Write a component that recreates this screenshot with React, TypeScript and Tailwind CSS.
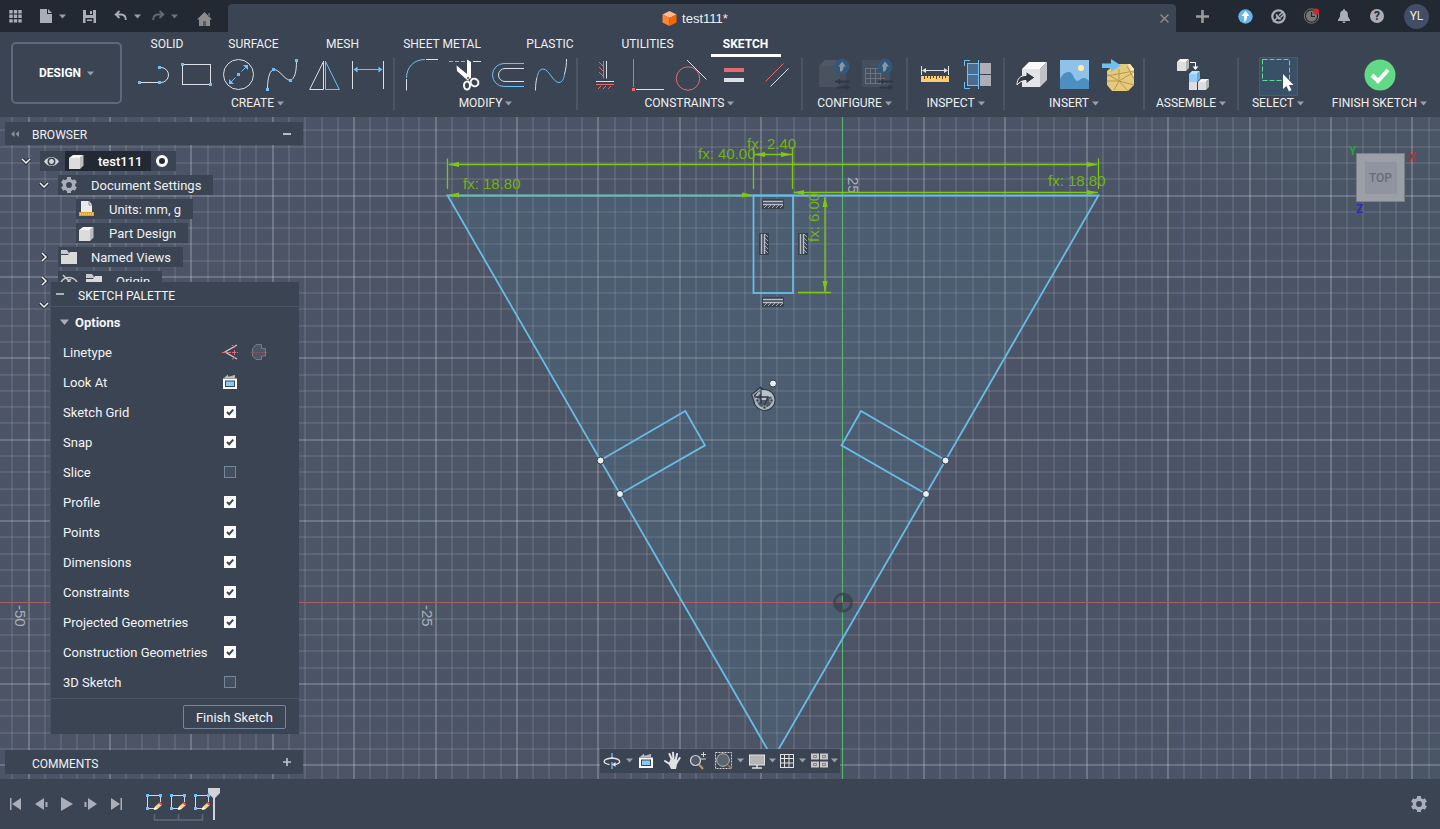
import type { ReactNode } from "react";

const BLUE = "#6cc1f7";
const WHITE = "#dcdfe4";
const RED = "#e06c70";
const GREY = "#a9aeb8";

function Icon({ size = 32, box, children }: { size?: number; box?: string; children: ReactNode }) {
  return (
    <svg
      width={size}
      height={size}
      viewBox={box ?? `0 0 ${size} ${size}`}
      fill="none"
      className="shrink-0 overflow-visible"
      aria-hidden="true"
    >
      {children}
    </svg>
  );
}

function Caret({ dim = false }: { dim?: boolean }) {
  return (
    <svg width="7" height="5" viewBox="0 0 7 5" className="shrink-0" aria-hidden="true">
      <path d="M0 .5H7L3.5 4.5Z" fill={dim ? "#6b7280" : "#9aa0ab"} />
    </svg>
  );
}

function Dots({ points }: { points: [number, number][] }) {
  return (
    <>
      {points.map(([x, y]) => (
        <rect key={`${x}-${y}`} x={x - 1.5} y={y - 1.5} width="3" height="3" fill={BLUE} />
      ))}
    </>
  );
}

function Box({ x, y, s, d, front = "#dedede", top = "#f4f4f4", side = "#b4b4b4" }: { x: number; y: number; s: number; d: number; front?: string; top?: string; side?: string }) {
  return (
    <>
      <path d={`M${x} ${y + d}L${x + d} ${y}H${x + s + d}L${x + s} ${y + d}Z`} fill={top} />
      <path d={`M${x + s} ${y + d}L${x + s + d} ${y}V${y + s}L${x + s} ${y + s + d}Z`} fill={side} />
      <rect x={x} y={y + d} width={s} height={s} fill={front} />
    </>
  );
}

/* ---------- ribbon drawings ---------- */

const createTools: [string, ReactNode][] = [
  ["Line", <>
    <path d="M2.5 23.5H22M22.5 8.5h1.5a7.5 7.5 0 0 1 0 15H22.5" stroke={WHITE} />
    <Dots points={[[2.5, 23.5], [22.5, 23.5], [22.5, 8.5]]} />
  </>],
  ["Rectangle", <>
    <rect x="2.5" y="5.5" width="28" height="20" stroke={WHITE} />
    <Dots points={[[2.5, 5.5], [30.5, 25.5]]} />
  </>],
  ["Circle", <>
    <circle cx="15.5" cy="15.5" r="15" stroke={WHITE} />
    <path d="M8 23L12.5 18.5M18.5 12.5L23 8" stroke={BLUE} />
    <path d="M6 25V20L11 25ZM25 6V11L20 6Z" fill={BLUE} />
    <Dots points={[[15.5, 15.5]]} />
  </>],
  ["Spline", <>
    <path d="M1.5 30C1.5 18 4 11 8 10.5 14 11 18 20 24 21.5 29 20 30.5 12 30.5 2" stroke={WHITE} />
    <Dots points={[[1.5, 30.5], [7.5, 10.5], [24.5, 21.5], [30.5, 1.5]]} />
  </>],
  ["Mirror", <>
    <path d="M14.5 2V30.5H.7L14.5 2.5" stroke={WHITE} />
    <path d="M16.5 2V30.5H30.3L16.5 2.5" stroke={BLUE} />
  </>],
  ["Sketch Dimension", <>
    <path d="M.5 2V30M31.5 2V30" stroke={WHITE} />
    <path d="M3 10.5H29" stroke={BLUE} />
    <path d="M1.5 10.5L5.5 7.5V13.5ZM30.5 10.5L26.5 7.5V13.5Z" fill={BLUE} />
  </>],
];

const modifyTools: [string, ReactNode][] = [
  ["Fillet", <>
    <path d="M.5 31.5V20M20 .5H32" stroke={WHITE} />
    <path d="M.5 19C.5 8 8 .5 19 .5" stroke={BLUE} />
  </>],
  ["Trim", <>
    <path d="M0 2.5H17" stroke={BLUE} strokeDasharray="4 2" />
    <path d="M24 2.5H32" stroke={WHITE} />
    <path d="M18 .5L22 3V19L18 21Z" fill="#fff" />
    <path d="M7.5 6.5L18 15 20 22 17 20 8 12Z" fill="#fff" />
    <ellipse cx="18" cy="26.5" rx="3" ry="4" stroke="#fff" strokeWidth="2" />
    <ellipse cx="25.5" cy="23.5" rx="4" ry="3.6" stroke="#fff" strokeWidth="2" transform="rotate(35 25.5 23.5)" />
    <circle cx="19" cy="19" r="1" fill="#3b4453" />
  </>],
  ["Offset", <>
    <path d="M32 4.5H12a11.5 11.5 0 0 0 0 23H32" stroke={BLUE} />
    <path d="M32 9.5H13a6.5 6.5 0 0 0 0 13H32" stroke={WHITE} />
  </>],
  ["Blend Curve", <>
    <path d="M.5 31.5C.5 26 1 22 2 18.5M29.5 15C31 10 31.5 5 31.5 0" stroke={WHITE} />
    <path d="M2 18.5C3 13 5 10 8 10 14 10 18 23.5 24 23.5 27 23.5 29 20 29.5 15" stroke={BLUE} />
  </>],
];

const constraintTools: [string, ReactNode][] = [
  ["Horizontal/Vertical", <>
    <path d="M14.5 2V19.5M14 7L10 3M14 12L10 8M14 17L10 13M7 25.5H25M12 27L9 30M17 27L14 30M22 27L19 30" stroke={RED} />
    <path d="M17.5 2V19.5M7 22.5H25" stroke={WHITE} />
  </>],
  ["Perpendicular", <>
    <path d="M1.5 0V28" stroke={RED} />
    <rect x="0" y="29" width="3" height="3" fill={RED} />
    <path d="M4 30.5H32" stroke={WHITE} />
  </>],
  ["Tangent", <>
    <circle cx="13" cy="19.5" r="11.7" stroke={RED} />
    <path d="M12 1L31.5 20.5" stroke={WHITE} />
  </>],
  ["Equal", <>
    <rect x="6" y="9" width="20" height="4" fill={RED} />
    <rect x="6" y="19" width="20" height="4" fill={WHITE} />
  </>],
  ["Parallel", <>
    <path d="M4.5 22.5L22.5 4.5" stroke={RED} />
    <path d="M9.5 27.5L27.5 9.5" stroke={WHITE} />
  </>],
];

const upBadge = (
  <>
    <circle cx="24" cy="7.5" r="7.7" fill="#2f587b" />
    <path d="M24 2.5L28 7.5H25.5C25.5 10 25 12 23.3 12.5H22V7.5H20.5Z" fill="#8b95a3" />
  </>
);

const slider = <path d="M17 22.5H32M19 28.5H32M21.5 20V25M28.5 26V31" stroke="#2f3744" strokeWidth="2" />;

const configureTools: [string, ReactNode][] = [
  ["Create Configuration", <>
    <Box x={1} y={1} s={21} d={6} front="#4a5260" top="#505866" side="#454d5b" />
    {slider}
    {upBadge}
  </>],
  ["Configuration Table", <>
    <rect x="1" y="1" width="28" height="27" fill="#464f5d" />
    <path d="M4 9.5H24M4 14.5H24M4 19.5H24M4 24.5H24M4.5 9V24.5M9.5 9V24.5M14.5 9V24.5M19.5 9V24.5" stroke="#6a7280" />
    {slider}
    {upBadge}
  </>],
];

const inspectTools: [string, ReactNode][] = [
  ["Measure", <>
    <path d="M2.5 7V16M29.5 7V16M4 11.5H28" stroke="#dfe2e6" />
    <path d="M3 11.5L7 9V14ZM29 11.5L25 9V14Z" fill="#dfe2e6" />
    <rect x="2" y="17" width="28" height="6" fill="#fbcb70" />
    <path d="M5.5 17v3M8.5 17v2M11.5 17v3M14.5 17v2M17.5 17v3M20.5 17v2M23.5 17v3M26.5 17v2" stroke="#5e4a2a" />
  </>],
  ["Section Analysis", <>
    <rect x="5" y="4" width="12" height="11" fill="#4c6c90" />
    <rect x="5" y="16" width="12" height="11" fill="#4c6c90" />
    <path d="M5 4.5H17M5 15.5H17M5 26.5H17M5.5 4V27M8 1.5H2.5V7M2.5 23V29.5H8M16.5 1V30" stroke={BLUE} />
    <rect x="18" y="4" width="11" height="11" fill="#adafb4" />
    <rect x="18" y="16" width="11" height="11" fill="#adafb4" />
  </>],
];

const insertTools: [string, ReactNode][] = [
  ["Insert Derive", <>
    <Box x={6} y={3} s={18} d={7} front="#e3e5e9" top="#fbfbfb" side="#c0c2c8" />
    <path d="M1 26C1 19 5 16.5 10 16.5V12.5L19 18.5 10 25V21.5C6 21.5 3.500 23 1 26Z" fill="#343a44" stroke="#f2f2f2" />
  </>],
  ["Canvas", <>
    <rect x="1" y="1" width="29" height="29" fill="#8ec2e8" />
    <circle cx="22" cy="9" r="3" fill="#fdeeb0" />
    <path d="M1 20C4 14 7 13 10 13 14 13 15 21 18 22 20 22 22 19 25 19 27 19 29 21 30 22V30H1Z" fill="#4d8fc0" />
  </>],
  ["Insert Mesh", <>
    <path d="M5 12L13 5H28L32 10V26L26 32H10L5 26Z" fill="#e6ca7c" />
    <path d="M26 5H28L32 10V18Z" fill="#f8ecc0" />
    <path d="M5 17L32 12M5 22H17L32 26M12 31L17 22 32 13M5 15L17 22 26 32M17 22V10M25 7L32 20" stroke="#b59a52" />
    <path d="M0 4.500H9V0L19 6.500 9 13V9H0Z" fill={BLUE} />
  </>],
];

const groups: { name: string; width: string; inset?: string; tools: [string, ReactNode][] }[] = [
  { name: "CREATE", width: "w-[273px]", inset: "pl-[5px]", tools: createTools },
  { name: "MODIFY", width: "w-[183px]", tools: modifyTools },
  { name: "CONSTRAINTS", width: "w-[225px]", tools: constraintTools },
  { name: "CONFIGURE", width: "w-[105px]", tools: configureTools },
  { name: "INSPECT", width: "w-[97px]", tools: inspectTools },
  { name: "INSERT", width: "w-[140px]", tools: insertTools },
  {
    name: "ASSEMBLE",
    width: "w-[94px]",
    tools: [["New Component", <>
      <Box x={1} y={0} s={9} d={3} />
      <path d="M14 3.500H19.500V8" stroke="#fff" />
      <path d="M16.500 7.500H22.500L19.500 11Z" fill="#fff" />
      <Box x={13} y={23} s={8} d={0} />
      <Box x={13} y={12} s={8} d={3} front="#8fcfff" top="#b9e1ff" side="#69a9dc" />
      <Box x={22} y={20} s={8} d={3} />
    </>]],
  },
];

/* ---------- top bar ---------- */

const topBtn = "flex h-7 items-center justify-center";

function TopBar() {
  return (
    <header className="flex h-8 shrink-0 items-end bg-[#222933]">
      <div className="flex h-8 w-[228px] shrink-0 items-center">
        <button aria-label="Data panel" className={`${topBtn} w-[30px]`}>
          <Icon size={13}>
            <path d="M2 0v13M6.500 0v13M11 0v13" stroke={GREY} strokeWidth="3.400" strokeDasharray="3.400 1.200" />
          </Icon>
        </button>
        <button aria-label="File" className={`${topBtn} ml-[6px] w-8 gap-[6px]`}>
          <Icon size={14}>
            <path d="M1 0H8V5H13V14H1Z" fill={GREY} />
            <path d="M9 0L13 4H9Z" fill={GREY} />
          </Icon>
          <Caret />
        </button>
        <button aria-label="Save" className={`${topBtn} ml-[6px] w-[30px]`}>
          <Icon size={13}>
            <path d="M0 0H13V13H0Z" fill={GREY} />
            <path d="M3 0H10V5H3ZM2.500 8H10.500V13H2.500Z" fill="#222933" />
            <path d="M7 1H9V4H7ZM4 9.500H9V11H4Z" fill={GREY} />
          </Icon>
        </button>
        <button aria-label="Undo" className={`${topBtn} ml-2 w-8 gap-[7px]`}>
          <Icon size={12}>
            <path d="M4.500 1L.7 4.500L4.500 8M1 4.500H6C9.500 4.500 10.800 6.500 10.800 10" stroke={GREY} strokeWidth="1.800" />
          </Icon>
          <Caret />
        </button>
        <button aria-label="Redo" className={`${topBtn} ml-[5px] w-8 gap-[7px]`}>
          <Icon size={12}>
            <path d="M7.500 1L11.300 4.500L7.500 8M11 4.500H6C2.500 4.500 1.200 6.500 1.200 10" stroke="#636975" strokeWidth="1.800" />
          </Icon>
          <Caret dim />
        </button>
        <button aria-label="Home" className={`${topBtn} ml-[7px] w-8 pt-[6px]`}>
          <Icon size={15}>
            <path d="M7.500 0L15 7.500H13V14H2V7.500H0Z" fill="#8d8d8d" />
            <path d="M11 1H13V5H11ZM6 9H9V14H6Z" fill="#5c5c5c" />
          </Icon>
        </button>
      </div>

      <div className="flex h-7 min-w-0 flex-1 items-center rounded-t-[4px] bg-[#3b4453] pr-1">
        <div className="flex flex-1 items-center justify-center gap-[5px] pt-px pl-[6px] font-['Liberation_Sans',sans-serif] text-[13px] text-[#f0f0f0]">
          <Icon size={15}>
            <path d="M7.500 0L14.500 3.500 7.500 7 .5 3.500Z" fill="#ffb98a" />
            <path d="M.5 3.500L7.500 7V15L.5 11.500Z" fill="#ff8438" />
            <path d="M14.500 3.500L7.500 7V15L14.500 11.500Z" fill="#f56a00" />
          </Icon>
          <span>test111*</span>
        </div>
        <button aria-label="Close tab" className="flex size-4 items-center justify-center">
          <Icon size={9}>
            <path d="M.5 .5L8.500 8.500M8.500 .5L.5 8.500" stroke="#8d8d8d" strokeWidth="1.400" />
          </Icon>
        </button>
      </div>

      <div className="flex h-8 w-[264px] shrink-0 items-center">
        <button aria-label="New tab" className={`${topBtn} ml-3 w-7`}>
          <Icon size={13}>
            <path d="M6.500 0V13M0 6.500H13" stroke="#9b9b9b" strokeWidth="2.600" />
          </Icon>
        </button>
        <button aria-label="Updates" className={`${topBtn} ml-[13px] w-8`}>
          <Icon size={15}>
            <circle cx="7.500" cy="7.500" r="7.200" fill="#68b5ee" />
            <path d="M7.500 2L11.500 7H9C9 10 8.500 12 6 13V7H3.500Z" fill="#fff" />
          </Icon>
        </button>
        <button aria-label="Extensions" className={`${topBtn} w-[34px]`}>
          <Icon size={15}>
            <circle cx="7.500" cy="7.500" r="6.200" stroke={GREY} strokeWidth="2.200" />
            <path d="M5 4.500L10.500 10C8 12 4 9 5 4.500Z" fill={GREY} />
            <path d="M2 13L6 9M8 6.500L11 3.500M9.500 8.500L12.500 5.500" stroke={GREY} strokeWidth="1.500" />
          </Icon>
        </button>
        <button aria-label="Job status" className={`${topBtn} w-[34px]`}>
          <Icon size={16}>
            <circle cx="7.500" cy="8" r="7.200" stroke="#777" />
            <circle cx="7.500" cy="8" r="5.500" fill="#777" />
            <path d="M7.500 4V8.500H11" stroke="#222933" strokeWidth="1.200" />
            <circle cx="12" cy="3.500" r="3" fill="#e32020" />
          </Icon>
        </button>
        <button aria-label="Notifications" className={`${topBtn} w-[30px]`}>
          <Icon size={14}>
            <path d="M7 0C8 0 8 1 8 1.500 11 2 11 5 11 7.500L13 11V12H1V11L3 7.500C3 5 3 2 6 1.500 6 1 6 0 7 0ZM5.500 12.500H8.500C8.500 14.500 5.500 14.500 5.500 12.500Z" fill={GREY} />
          </Icon>
        </button>
        <button aria-label="Help" className={`${topBtn} w-9`}>
          <span className="flex size-[14px] items-center justify-center rounded-full bg-[#a9aeb8] text-[12px] leading-[14px] font-bold text-[#222933]">?</span>
        </button>
        <button aria-label="Account" className="ml-[9px] flex size-[25px] items-center justify-center rounded-full bg-[#434d63] text-[12px] text-[#f0ead8]">
          YL
        </button>
      </div>
    </header>
  );
}

/* ---------- ribbon ---------- */

const tabs: [string, string][] = [
  ["SOLID", "w-[78px]"],
  ["SURFACE", "w-[95px]"],
  ["MESH", "w-[83px]"],
  ["SHEET METAL", "w-[116px]"],
  ["PLASTIC", "w-[100px]"],
  ["UTILITIES", "w-[95px]"],
  ["SKETCH", "w-[101px]"],
];

function GroupLabel({ children }: { children: ReactNode }) {
  return (
    <button className="flex h-[18px] shrink-0 items-center gap-[3px] text-[12px] leading-[18px] whitespace-nowrap text-[#eef0f2]">
      {children}
      <Caret />
    </button>
  );
}

function Ribbon() {
  return (
    <div className="flex h-[85px] shrink-0 bg-[#3b4453]">
      <div className="flex w-[122px] shrink-0 pt-[10px] pl-[11px]">
        <button className="flex h-[62px] flex-1 items-center justify-center gap-[6px] rounded-[5px] border-2 border-[#5c697b] text-[12px] font-bold text-white">
          DESIGN
          <Caret />
        </button>
      </div>
      <div className="min-w-0 flex-1">
        <nav className="ml-[6px] flex h-[26px] items-start text-[12px] text-[#eef0f2]">
          {tabs.map(([name, width]) => (
            <div key={name} className={`flex shrink-0 justify-center ${width}`}>
              {name === "SKETCH" ? (
                <button className="h-[25px] w-[70px] border-b-[3px] border-white pt-px leading-[20px] font-bold whitespace-nowrap text-white">{name}</button>
              ) : (
                <button className="h-[22px] pt-px leading-[20px] whitespace-nowrap">{name}</button>
              )}
            </div>
          ))}
        </nav>
        <div className="flex h-[54px]">
          {groups.map((g) => (
            <div key={g.name} className={`flex h-[52px] shrink-0 flex-col items-center border-r-2 border-[#4a5565] ${g.width}`}>
              <div className={`flex h-9 shrink-0 items-start pt-px ${g.inset ?? "pl-[2px]"}`}>
                {g.tools.map(([name, art]) => (
                  <button key={name} aria-label={name} className="flex w-[43px] justify-center">
                    <Icon>{art}</Icon>
                  </button>
                ))}
              </div>
              <GroupLabel>{g.name}</GroupLabel>
            </div>
          ))}
          <div className="flex w-[78px] shrink-0 flex-col items-center">
            <div className="flex h-9 shrink-0 items-center">
              <button aria-label="Select" className="flex size-[39px] items-center justify-center border border-[#35637f] bg-[#395166]">
                <Icon>
                  <rect x=".5" y="-.5" width="27" height="21" stroke="#62dc8c" strokeDasharray="5 2" />
                  <path d="M21 14V29L24.500 26 27 31.500 29.500 30 27 25H31.500Z" fill="#fff" />
                </Icon>
              </button>
            </div>
            <GroupLabel>SELECT</GroupLabel>
          </div>
          <div className="flex min-w-[123px] flex-1 flex-col items-center pl-[2px]">
            <div className="flex h-9 shrink-0 items-start pt-px">
              <button aria-label="Finish Sketch">
                <Icon>
                  <circle cx="16" cy="16" r="15.500" fill="#62d987" />
                  <path d="M8 16L14 22L24 11" stroke="#fff" strokeWidth="4" />
                </Icon>
              </button>
            </div>
            <GroupLabel>FINISH SKETCH</GroupLabel>
          </div>
        </div>
      </div>
    </div>
  );
}

/* ---------- canvas ---------- */

const STEP = 16.28;
const ORIGIN = { x: 842.5, y: 485.5 };
const columns = Array.from({ length: 200 }, (_, i) => i - 55).filter((i) => i !== 0);
const rows = Array.from({ length: 110 }, (_, i) => i - 32).filter((i) => i !== 0);

const lineColour = (i: number) => (i % 5 === 0 ? "rgba(255,255,255,.25)" : "rgba(255,255,255,.12)");

function Constraint({ x, y, vertical = false }: { x: number; y: number; vertical?: boolean }) {
  return (
    <g transform={`translate(${x} ${y})${vertical ? " rotate(-90)" : ""}`}>
      <rect x="-11" y="-5" width="22" height="10" rx="1" fill="#39424f" />
      <path d="M-10 -2.500H10M-10 .5H10" stroke="#b9bec6" strokeWidth="1.500" />
      <path d="M-9 4L-6 1M-5 4L-2 1M-1 4L2 1M3 4L6 1M7 4L10 1" stroke="#a3a9b2" />
    </g>
  );
}

function Drawing() {
  return (
    <svg className="absolute inset-0 h-full w-full" role="img" aria-label="Sketch of test111">
      <defs>
        <radialGradient id="glow" cx="30%" cy="60%" r="80%">
          <stop offset="0" stopColor="#4b5666" />
          <stop offset=".5" stopColor="#4c5466" />
          <stop offset="1" stopColor="#4a5566" />
        </radialGradient>
      </defs>
      <rect width="100%" height="100%" fill="url(#glow)" />
      {columns.map((i) => (
        <line key={`c${i}`} x1={Math.round(ORIGIN.x + i * STEP)} x2={Math.round(ORIGIN.x + i * STEP)} y1="0" y2="100%" stroke={lineColour(i)} strokeWidth="1.6" />
      ))}
      {rows.map((i) => (
        <line key={`r${i}`} y1={Math.round(ORIGIN.y + i * STEP)} y2={Math.round(ORIGIN.y + i * STEP)} x1="0" x2="100%" stroke={lineColour(i)} strokeWidth="1.6" />
      ))}
      <polygon points="447.5,78.5 1098.5,78.5 773,642" fill="#50809c" fillOpacity=".22" />
      <path d={`M0 ${ORIGIN.y}H4000`} stroke="#b25a66" strokeWidth="1.200" />
      <path d={`M${ORIGIN.x} 0V4000`} stroke="#51b566" strokeWidth="1.200" />

      <g fontFamily="'Liberation Sans', sans-serif" fontSize="15" fill="#aab0ba">
        <text transform="translate(848 60) rotate(90)">25</text>
        <text transform="translate(422 488) rotate(90)">-25</text>
        <text transform="translate(15 488) rotate(90)">-50</text>
      </g>

      <g stroke="#68bce6" strokeWidth="1.800">
        <polygon points="447.5,78.5 1098.5,78.5 773,642" fill="none" />
        <rect x="753.500" y="78.500" width="39.500" height="97.500" fill="none" />
        <path d="M600.500 343.300L685.300 294L705 328.300L620 377M945.500 343.300L861 294L841.500 328.300L926 377" fill="none" />
      </g>

      <g stroke="#7fc908" strokeWidth="1.300">
        <path d="M447.500 41.500V72M1098.500 41.500V72M449 47.500H1097M753.500 30V72M792.500 30V72M754 37.500H792M794 75.500H1098M825 80V175M798 175.500H831" />
        <path d="M449 78.500H752" strokeOpacity=".45" />
      </g>
      <path
        d="M448 47.500l11 -2.500v5ZM1098 47.500l-11 -2.500v5ZM754 37.500l11 -2.500v5ZM792 37.500l-11 -2.500v5ZM793 75.500l11 -2.500v5ZM1098 75.500l-11 -2.500v5ZM448 78l11 -2.500v5ZM753 78l-11 -2.500v5ZM825 79l-2.500 11h5ZM825 175l-2.500 -11h5Z"
        fill="#7fc908"
      />
      <g fontFamily="'Liberation Sans', sans-serif" fontSize="15" fill="#72b312">
        <text x="698" y="42">fx: 40.00</text>
        <text x="747" y="32">fx: 2.40</text>
        <text x="463" y="72">fx: 18.80</text>
        <text x="1048" y="69">fx: 18.80</text>
        <text transform="translate(819 125) rotate(-90)">fx: 6.00</text>
      </g>

      <Constraint x={773} y={87} />
      <Constraint x={773} y={185} />
      <Constraint x={764} y={127} vertical />
      <Constraint x={803} y={127} vertical />

      <g fill="#e9eef2" stroke="#303845">
        <circle cx="600.500" cy="343.500" r="3.500" />
        <circle cx="620" cy="377" r="3.500" />
        <circle cx="945.500" cy="343.500" r="3.500" />
        <circle cx="926" cy="377" r="3.500" />
        <circle cx="773" cy="266.500" r="3.500" />
      </g>

      <g fill="none">
        <path d="M753 278L760.500 271.500 768 278 765 287 756 287Z" stroke="#303845" strokeWidth="3.500" />
        <circle cx="764.500" cy="283" r="8.800" stroke="#303845" strokeWidth="4.500" />
        <circle cx="764.500" cy="283" r="8.800" stroke="#aeb7c1" strokeWidth="2.500" />
        <circle cx="764.500" cy="283" r="7" fill="#4e5d6c" />
        <path d="M760.500 272L753 278 756 286" stroke="#9ca7b3" strokeWidth="1.300" />
        <path d="M761 283V273.500C766 273 771 275 773 279L767 280.500V283Z" fill="#b9c1c9" />
        <path d="M755 280H768L764 289M761 274V287" stroke="#303845" strokeWidth="1.300" />
        <path d="M756 282h3v3h-3ZM770 282h3v3h-3ZM763 289h3v3h-3Z" fill="#303845" stroke="#aeb7c1" strokeWidth=".8" />
      </g>

      <g opacity=".75">
        <circle cx="843" cy="485.500" r="8.500" fill="none" stroke="#36424a" strokeWidth="3" />
        <path d="M843 485.500V477A8.500 8.500 0 0 1 851.500 485.500ZM843 485.500V494A8.500 8.500 0 0 1 834.500 485.500Z" fill="#36424a" />
      </g>
    </svg>
  );
}

function ViewCube() {
  return (
    <div className="absolute top-[36px] right-[35px]">
      <button className="flex size-[49px] items-center justify-center border border-[#7b7f88] bg-[#9b9fa8] text-[#686d78]">
        <span className="flex size-8 items-center justify-center bg-[#9094a0] text-[12px] font-medium">TOP</span>
      </button>
      <span className="absolute -top-[9px] -left-[7px] text-[12px] leading-[14px] font-bold text-[#2f9e44]">Y</span>
      <span className="absolute -top-[3px] -right-[11px] text-[12px] leading-[14px] font-bold text-[#a8323e]">X</span>
      <span className="absolute top-[49px] left-0 text-[12px] leading-[14px] font-bold text-[#2b2fae]">Z</span>
    </div>
  );
}

/* ---------- browser tree ---------- */

function Chevron({ open }: { open: boolean }) {
  return (
    <Icon size={10}>
      <g transform={open ? undefined : "rotate(-90 5 5)"}>
        <path d="M1 3L5 7L9 3" stroke="#2b323d" strokeWidth="3.500" />
        <path d="M1 3L5 7L9 3" stroke="#f2f2f2" strokeWidth="1.500" />
      </g>
    </Icon>
  );
}

const cubeIcon = (
  <Icon size={15}>
    <path d="M0 4L4 1H14.500L11 4Z" fill="#f7f7f7" />
    <rect y="4" width="11" height="11" fill="#dcdcdc" />
    <path d="M11 4L14.500 1V11.500L11 15Z" fill="#bdbdbd" />
  </Icon>
);

const folderIcon = (
  <Icon size={16}>
    <path d="M0 1H6L8 4V5H0Z" fill="#c9c9c9" />
    <path d="M0 6H7L9 3H16V15H0Z" fill="#dadada" />
  </Icon>
);

function Gear({ size = 16 }: { size?: number }) {
  return (
    <Icon size={size} box="0 0 16 16">
      <path d="M6 0H10V3H6ZM6 13H10V16H6Z" fill={GREY} />
      <path d="M6 0H10V3H6ZM6 13H10V16H6Z" fill={GREY} transform="rotate(60 8 8)" />
      <path d="M6 0H10V3H6ZM6 13H10V16H6Z" fill={GREY} transform="rotate(120 8 8)" />
      <circle cx="8" cy="8" r="4.600" stroke={GREY} strokeWidth="3.400" />
    </Icon>
  );
}

const unitsIcon = (
  <Icon size={16}>
    <path d="M2 0H10L13 3.500V11H2Z" fill="#e8eaee" />
    <path d="M10 0V4H13" stroke="#8a8f98" />
    <rect y="11" width="15" height="4" fill="#e0a11c" />
    <path d="M1 13H15" stroke="#fff2b0" strokeDasharray="1 1" />
  </Icon>
);

const rowBox = "flex h-5 items-center bg-[#3b4453] text-[13px] leading-5 whitespace-nowrap text-[#eef0f2]";

function TreeRow({ open, indent, icons, label }: { open?: boolean; indent: string; icons: ReactNode; label: string }) {
  return (
    <li className={`flex h-6 items-start ${indent}`}>
      {open !== undefined && (
        <button aria-label="Toggle" className="flex h-5 w-[19px] items-center">
          <Chevron open={open} />
        </button>
      )}
      <span className={`${rowBox} pr-3 pl-[3px]`}>
        {icons}
        <span className="ml-[14px] pt-[2px]">{label}</span>
      </span>
    </li>
  );
}

function Browser() {
  return (
    <aside className="absolute top-[5px] left-[5px] w-[298px]">
      <div className="flex h-[23px] items-center bg-[#3b4453] px-[6px] text-[12px] text-[#eef0f2]">
        <button aria-label="Dock" className="flex w-[21px]">
          <Icon size={8}>
            <path d="M3.500 1V7L0 4ZM8 1V7L4.500 4Z" fill="#8892a5" />
          </Icon>
        </button>
        <span className="flex-1 pt-[2px]">BROWSER</span>
        <button aria-label="Collapse" className="mr-[6px] h-[2px] w-2 bg-[#b9bdc5]" />
      </div>
      <ul className="pt-[6px]">
        <li className="flex h-6 items-start pl-4">
          <button aria-label="Toggle" className="flex h-5 w-[19px] items-center">
            <Chevron open />
          </button>
          <span className={`${rowBox} w-[136px]`}>
            <span className="flex w-[25px] justify-center pr-[3px]">
              <Icon size={15}>
                <path d="M0 7.500C4 1.500 11 1.500 15 7.500 11 13.500 4 13.500 0 7.500Z" fill="#d5d5d5" />
                <circle cx="7.500" cy="7.500" r="3.200" stroke="#3b4453" strokeWidth="1.500" />
              </Icon>
            </span>
            <span className="flex h-5 w-[86px] items-center bg-[#222933] pl-1 font-medium text-white">
              {cubeIcon}
              <span className="ml-[14px] pt-px">test111</span>
            </span>
            <span className="ml-[5px] size-3 rounded-full border-[3px] border-white bg-[#222933]" />
          </span>
        </li>
        <TreeRow open indent="pl-[34px]" icons={<Gear />} label="Document Settings" />
        <TreeRow indent="pl-[71px]" icons={unitsIcon} label="Units: mm, g" />
        <TreeRow indent="pl-[71px]" icons={<span className="w-4">{cubeIcon}</span>} label="Part Design" />
        <TreeRow open={false} indent="pl-[34px]" icons={folderIcon} label="Named Views" />
        <TreeRow
          open={false}
          indent="pl-[34px]"
          icons={
            <span className="flex gap-[9px]">
              <Icon size={16}>
                <path d="M0 9C4 3 12 3 16 9M3 10C6 14 10 14 13 10M2 2L14 14M7 9A2 2 0 0 1 10 7" stroke="#c9c9c9" strokeWidth="1.500" />
              </Icon>
              {folderIcon}
            </span>
          }
          label="Origin"
        />
        <li className="flex h-6 items-start pl-[34px]">
          <button aria-label="Toggle" className="flex h-5 items-center">
            <Chevron open />
          </button>
        </li>
      </ul>
    </aside>
  );
}

/* ---------- sketch palette ---------- */

const options: [string, boolean][] = [
  ["Sketch Grid", true],
  ["Snap", true],
  ["Slice", false],
  ["Profile", true],
  ["Points", true],
  ["Dimensions", true],
  ["Constraints", true],
  ["Projected Geometries", true],
  ["Construction Geometries", true],
  ["3D Sketch", false],
];

function LookAt() {
  return (
    <Icon size={16}>
      <path d="M2 4L6 .5V2.500C9 3 11 1 13 1V4H2Z" fill="#b9bcc1" />
      <rect x="2" y="5.500" width="12" height="8.500" stroke="#fff" strokeWidth="2" fill="#3b4453" />
      <rect x="4" y="7.500" width="8" height="4.500" fill="#84c9fa" />
    </Icon>
  );
}

function Palette() {
  return (
    <section className="absolute top-[165px] left-[50px] w-[249px] border-l border-[#465162] bg-[#3b4453] text-[13px] text-[#f3f4f6]">
      <div className="flex h-[25px] items-center border-b border-[#4a5565] pl-[5px] text-[12px]">
        <button aria-label="Collapse palette" className="mr-[14px] h-[2px] w-2 bg-[#a9aeb8]" />
        <span className="pt-[3px]">SKETCH PALETTE</span>
      </div>
      <button className="flex h-[30px] items-center gap-[6px] pl-[9px] font-bold">
        <Icon size={9}>
          <path d="M0 1.500H9L4.500 7Z" fill="#a9aeb8" />
        </Icon>
        <span className="pt-[2px]">Options</span>
      </button>
      <div className="flex h-[30px] items-center pl-3">
        <span className="w-[159px] pt-[2px]">Linetype</span>
        <button aria-label="Construction" className="flex w-4">
          <Icon size={16}>
            <path d="M15 1L3 8L15 15" stroke="#c9ccd1" strokeWidth="1.300" />
            <path d="M0 8.500H16" stroke="#e06c70" strokeDasharray="4 1" />
            <path d="M12.500 6V11M10 1L13 3.500M10 15.500L13 13" stroke="#e06c70" />
          </Icon>
        </button>
        <button aria-label="Centerline" className="ml-[13px] flex w-4">
          <Icon size={16}>
            <path d="M5 .5H10.500V4.500H14.500V12H10.500V15.500H5L1.500 12V5Z" fill="#4d5664" stroke="#767d88" />
            <path d="M0 8.500H16" stroke="#8a5360" strokeDasharray="4 1" />
          </Icon>
        </button>
      </div>
      <div className="flex h-[30px] items-center pl-3">
        <span className="w-[159px] pt-[2px]">Look At</span>
        <button aria-label="Look At">
          <LookAt />
        </button>
      </div>
      {options.map(([name, on]) => (
        <label key={name} className="flex h-[30px] items-center pl-3">
          <span className="w-[161px] pt-[2px] whitespace-nowrap">{name}</span>
          <span className="grid">
            <input
              type="checkbox"
              defaultChecked={on}
              className="peer col-start-1 row-start-1 size-3 appearance-none border border-[#7487a0] bg-[#444e5f] checked:border-white checked:bg-white"
            />
            <svg viewBox="0 0 12 12" className="pointer-events-none col-start-1 row-start-1 hidden size-3 peer-checked:block" aria-hidden="true">
              <path d="M3 6L5.200 8.200L9.200 3.600" stroke="#3b4453" strokeWidth="2" fill="none" />
            </svg>
          </span>
        </label>
      ))}
      <div className="mt-px flex h-9 items-center justify-end border-t border-[#4a5565] pr-[13px]">
        <button className="h-6 rounded-[2px] border border-[#7487a0] px-3 pt-px leading-[22px]">Finish Sketch</button>
      </div>
    </section>
  );
}

function Comments() {
  return (
    <div className="absolute bottom-[5px] left-[5px] flex h-6 w-[298px] items-center bg-[#3b4453] pr-3 pl-[27px] text-[12px] text-[#eef0f2]">
      <span className="flex-1 pt-[3px]">COMMENTS</span>
      <button aria-label="Open comments">
        <Icon size={8}>
          <path d="M4 0V8M0 4H8" stroke="#c0c4cb" strokeWidth="1.600" />
        </Icon>
      </button>
    </div>
  );
}

/* ---------- navigation bar ---------- */

function NavBar() {
  const b = "flex h-6 shrink-0 items-center";
  return (
    <div className="absolute bottom-[6px] left-1/2 flex h-6 w-[240px] -translate-x-1/2 items-center bg-[#3b4453] pb-px pl-1">
      <button aria-label="Orbit" className={`${b} w-[34px] gap-[6px]`}>
        <Icon size={16}>
          <path d="M8 0V6M8 9V16" stroke="#5c9fd2" strokeWidth="1.800" />
          <path d="M5.500 11.500C-2 10.500 -2 6 8 5 18 6 17.500 10.500 11 11.500" stroke="#e5e5e5" strokeWidth="1.300" />
          <path d="M11.500 9V14L8 11.500Z" fill="#e5e5e5" />
        </Icon>
        <Caret />
      </button>
      <button aria-label="Look at" className={`${b} w-[26px]`}><LookAt /></button>
      <button aria-label="Pan" className={`${b} w-[25px]`}>
        <Icon size={17}>
          <path d="M5.500 2L8 8M9 .8L9.500 8M13 2L11.500 9M15.700 6L12.500 11M1 9L6.500 12.500" stroke="#e2e2e2" strokeWidth="2" strokeLinecap="round" />
          <path d="M6.500 7.500H12.500L13.500 10 12 17H7L4.500 11.500Z" fill="#e2e2e2" />
        </Icon>
      </button>
      <button aria-label="Zoom" className={`${b} w-[26px]`}>
        <Icon size={18}>
          <circle cx="6.500" cy="8.500" r="5" stroke="#d5d5d5" strokeWidth="1.200" fill="#505968" />
          <path d="M10 12.500L14 17" stroke="#c39a62" strokeWidth="2" />
          <path d="M14.500 0V5M12 2.500H17M12 7H17" stroke="#d5d5d5" />
        </Icon>
      </button>
      <button aria-label="Fit" className={`${b} w-[34px] gap-[5px]`}>
        <Icon size={17}>
          <rect x=".5" y=".5" width="16" height="16" stroke="#d5d5d5" strokeDasharray="2 1" />
          <circle cx="8" cy="8" r="6.300" stroke="#b5b5b5" fill="#5b6370" />
          <path d="M13 13L16.500 17" stroke="#8b7355" strokeWidth="2" />
        </Icon>
        <Caret />
      </button>
      <button aria-label="Display settings" className={`${b} w-[31px] gap-[4px]`}>
        <Icon size={16}>
          <rect x=".5" y="2" width="15" height="10" fill="#b5b5b5" stroke="#e2e2e2" />
          <path d="M8 12V14.500M3 15H13" stroke="#e2e2e2" strokeWidth="1.500" />
        </Icon>
        <Caret />
      </button>
      <button aria-label="Grid and snaps" className={`${b} w-[31px] gap-[5px]`}>
        <Icon size={14}>
          <path d="M.5 0V14M4.500 0V14M9 0V14M13.500 0V14M0 .5H14M0 4.500H14M0 9H14M0 13.500H14" stroke="#e2e2e2" />
        </Icon>
        <Caret />
      </button>
      <button aria-label="Viewports" className={`${b} w-[27px] gap-[3px]`}>
        <Icon size={17}>
          <path d="M0 1.500H8V7.500H0ZM9 1.500H17V7.500H9ZM0 9.500H8V15.500H0ZM9 9.500H17V15.500H9Z" fill="#c9c9c9" />
          <path d="M2.500 3.500H5.500V5.500H2.500ZM11.500 3.500H14.500V5.500H11.500ZM2.500 11.500H5.500V13.500H2.500ZM11.500 11.500H14.500V13.500H11.500Z" stroke="#7d828b" />
        </Icon>
        <Caret />
      </button>
    </div>
  );
}

/* ---------- timeline ---------- */

const playback: [string, string][] = [
  ["Go to start", "M1 2H2.500V14H1ZM12 2V14L3 8Z"],
  ["Step back", "M10 2V14L1 8ZM11.500 6H13.500V11H11.500Z"],
  ["Play", "M2 1L14 8L2 15Z"],
  ["Step forward", "M.5 6H2.500V11H.5ZM4 2L13 8L4 14Z"],
  ["Go to end", "M2 2L11 8L2 14ZM11.500 2H13V14H11.500Z"],
];

function Timeline() {
  return (
    <footer className="flex h-[50px] shrink-0 items-center bg-[#3b4453] pr-[13px] pl-[3px]">
      {playback.map(([name, d]) => (
        <button key={name} aria-label={name} className="flex w-[25px] justify-center">
          <Icon size={16} box="-1 0 16 16">
            <path d={d} fill="#a9aeb8" />
          </Icon>
        </button>
      ))}
      <div className="ml-[14px] flex h-[34px] flex-col pt-[7px]">
        <div className="flex">
          {[1, 2, 3].map((n) => (
            <button key={n} aria-label={`Sketch ${n}`} className="flex w-6 justify-center">
              <Icon size={16}>
                <path d="M3 1.500H13M3 14.500H9M1.500 3V13M14.500 3V8" stroke="#d5d8dc" />
                <Dots points={[[1.500, 1.500], [14.500, 1.500], [1.500, 14.500]]} />
                <path d="M8 16L9 12.500 13 9 15.500 11.500 11.500 15Z" fill="#fbd07a" />
                <path d="M12.800 9L14 7.800 16.500 10.300 15.400 11.500Z" fill="#ef4a4a" />
                <path d="M8 16L9 12.500 11.500 15Z" fill="#fff" />
              </Icon>
            </button>
          ))}
        </div>
        <svg width="72" height="8" viewBox="0 0 72 8" className="mt-[3px]" fill="none" aria-hidden="true">
          <path d="M12.500 1V7H60.500V1M36.500 1V7" stroke="#5c697b" strokeWidth="1.600" />
        </svg>
      </div>
      <svg width="12" height="32" viewBox="0 0 12 32" className="-ml-[6px] shrink-0" aria-hidden="true">
        <path d="M0 0H12V5L7 10V32H5V10L0 5Z" fill="#d0d3d9" />
      </svg>
      <button aria-label="Timeline settings" className="ml-auto">
        <Gear />
      </button>
    </footer>
  );
}

export default function App() {
  return (
    <div className="flex min-h-screen flex-col bg-[#3b4453] font-['Roboto','Liberation_Sans',sans-serif]">
      <TopBar />
      <Ribbon />
      <main className="relative min-h-[620px] flex-1 overflow-hidden">
        <Drawing />
        <ViewCube />
        <Browser />
        <Palette />
        <Comments />
        <NavBar />
      </main>
      <Timeline />
    </div>
  );
}
